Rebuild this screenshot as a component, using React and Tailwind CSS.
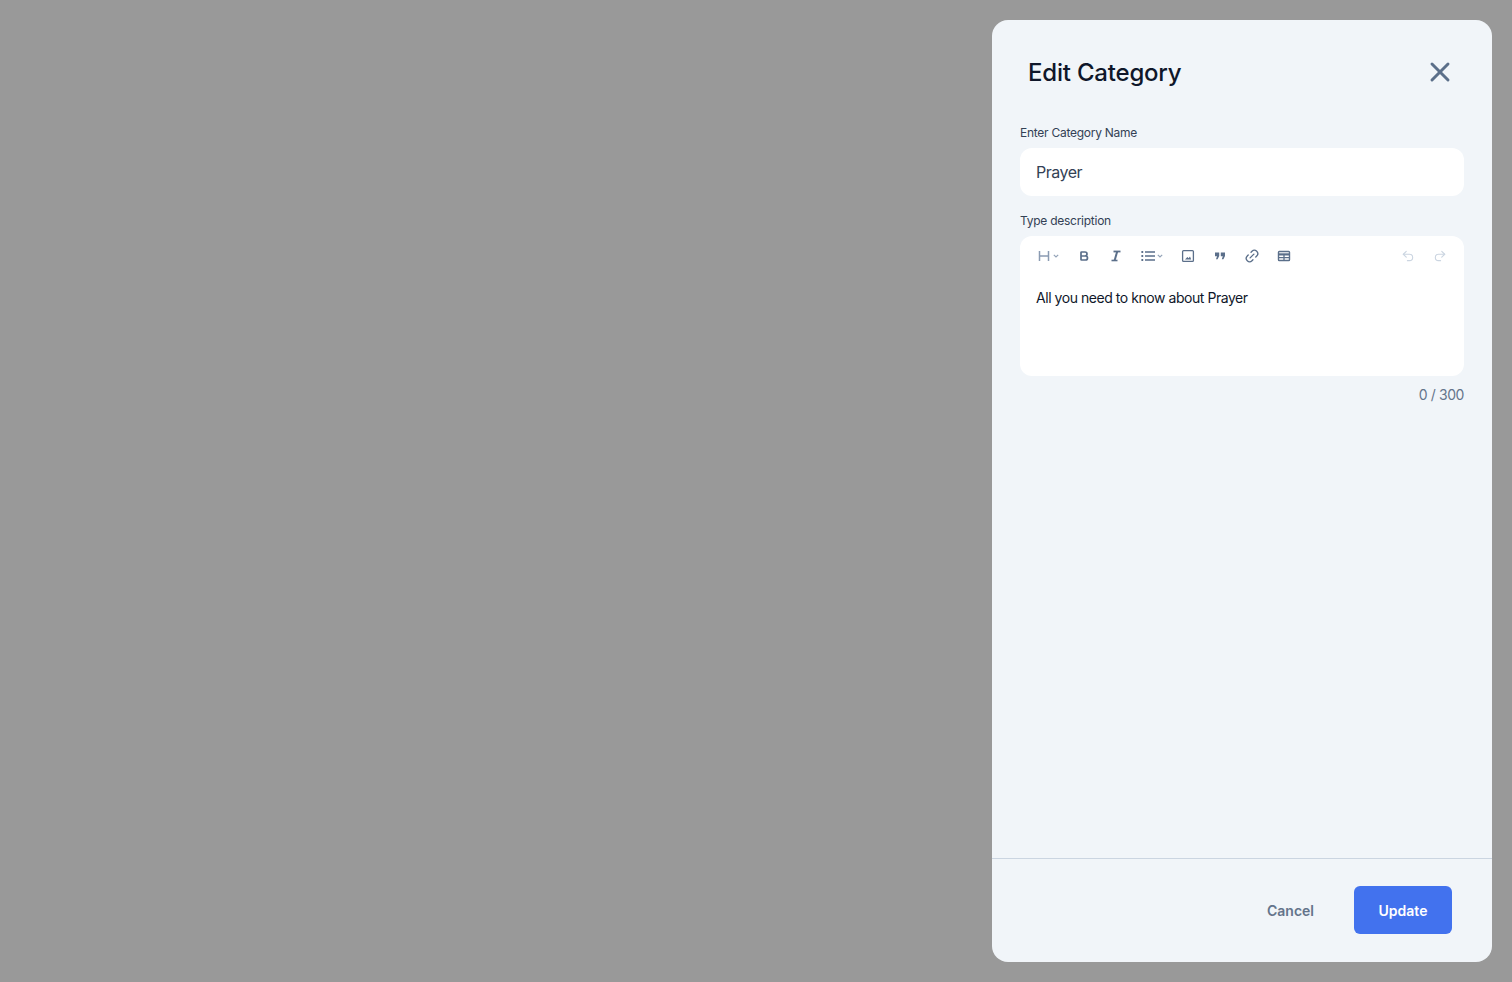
import React from "react";
import { X, Undo2, Redo2, Link2, Bold } from "lucide-react";

function ToolButton({ children }) {
  return <span className="flex h-4 w-4 items-center justify-center text-[#5b6f8a]">{children}</span>;
}

const Caret = () => (
  <svg width="6" height="4" viewBox="0 0 6 4" fill="none" stroke="#94a3b8" strokeWidth="1.2">
    <path d="M.8.8 3 3 5.2.8" />
  </svg>
);

const HeadingIcon = () => (
  <svg width="12" height="12" viewBox="0 0 12 12" fill="none" stroke="#8a9bb2" strokeWidth="1.5">
    <path d="M1.5 1v10M10.5 1v10M1.5 6h9" />
  </svg>
);

const ItalicIcon = () => (
  <svg width="12" height="12" viewBox="0 0 12 12" fill="none" stroke="#5b6f8a">
    <path d="M3.5 1.5h7" strokeWidth="1.8" />
    <path d="M7.2 1.5 4.6 10.5" strokeWidth="2" />
    <path d="M1.5 10.5h6" strokeWidth="1.6" />
  </svg>
);

const ListIcon = () => (
  <svg width="14" height="12" viewBox="0 0 14 12" fill="none" stroke="#5b6f8a" strokeWidth="1.3">
    <path d="M4 2h10M4 6h10M4 10h10" />
    <path d="M.4 2h1.8M.4 6h1.8M.4 10h1.8" strokeWidth="1.8" />
  </svg>
);

const ImageIcon = () => (
  <svg width="14" height="14" viewBox="0 0 14 14" fill="none">
    <rect x="1.6" y="1.6" width="10.8" height="10.8" rx="1" stroke="#5b6f8a" strokeWidth="1.3" />
    <path d="M4 10.4 6.4 8l1.2 1.2L9 7.6l1.2 2.8z" fill="#5b6f8a" />
  </svg>
);

const QuoteIcon = () => (
  <svg width="12" height="12" viewBox="0 0 12 12" fill="#5b6f8a">
    <path d="M1 2.5h4.2v3.4L3.6 9.2H2l1-3H1zM6.8 2.5H11v3.4L9.4 9.2H7.8l1-3h-2z" />
  </svg>
);

const TableIcon = () => (
  <svg width="14" height="14" viewBox="0 0 14 14" fill="none" stroke="#5b6f8a">
    <rect x="1.5" y="2.5" width="11" height="9" rx=".8" strokeWidth="1.4" />
    <path d="M1.5 5.4h11" strokeWidth="2.2" />
    <path d="M7 5v6.5M1.5 8.6h11" strokeWidth="1.3" />
  </svg>
);

export default function App() {
  return (
    <div className="flex h-[982px] w-full justify-end overflow-hidden bg-[#999999] p-5 font-['Inter','Liberation_Sans',sans-serif]">
      <div className="flex h-[942px] w-[500px] flex-col rounded-2xl bg-[#f1f5f9]">
        <div className="flex h-[104px] shrink-0 items-center justify-between pl-9 pr-[36px] pt-[2px]">
          <h2 className="text-[24px] font-medium tracking-[-0.2px] text-[#0f172a]">Edit Category</h2>
          <X size={32} strokeWidth={2.2} className="-mt-[2px] text-[#5b6f8a]" />
        </div>

        <div className="flex flex-1 flex-col px-7">
          <label className="h-4 pt-[1px] text-xs leading-4 tracking-[-0.26px] text-[#334155]">Enter Category Name</label>
          <div className="mt-2 flex h-12 items-center rounded-xl bg-white px-4 text-base tracking-[-0.5px] text-[#334155]">Prayer</div>

          <label className="mt-4 h-4 pt-[1px] text-xs leading-4 tracking-[-0.26px] text-[#334155]">Type description</label>
          <div className="mt-2 h-[140px] rounded-xl bg-white">
            <div className="flex h-10 items-center justify-between pl-[18px] pr-4">
              <div className="flex items-center gap-4">
                <span className="flex w-[22px] items-center gap-[3px]">
                  <HeadingIcon />
                  <Caret />
                </span>
                <span className="flex w-4 justify-center">
                  <Bold size={12} strokeWidth={3.4} className="text-[#5b6f8a]" />
                </span>
                <ToolButton><ItalicIcon /></ToolButton>
                <span className="flex w-[24px] items-center gap-[2px] pl-[1px]">
                  <ListIcon />
                  <Caret />
                </span>
                <span className="flex w-4 justify-center"><ImageIcon /></span>
                <ToolButton><QuoteIcon /></ToolButton>
                <ToolButton><Link2 size={16} strokeWidth={2} className="-rotate-45" /></ToolButton>
                <ToolButton><TableIcon /></ToolButton>
              </div>
              <div className="flex items-center gap-4 text-[#cbd5e1]">
                <span className="flex w-4 justify-center"><Undo2 size={14} strokeWidth={1.9} /></span>
                <span className="flex w-4 justify-center"><Redo2 size={14} strokeWidth={1.9} /></span>
              </div>
            </div>
            <p className="mt-[12px] px-4 text-sm leading-5 tracking-[-0.45px] text-[#0f172a]">All you need to know about Prayer</p>
          </div>
          <div className="mt-[9px] text-right text-sm leading-5 tracking-[-0.4px] text-[#64748b]">0 / 300</div>
        </div>

        <div className="flex h-[104px] shrink-0 items-center justify-end gap-10 border-t border-[#cbd5e1] pb-[1px] pl-6 pr-10">
          <button className="pt-[1px] text-sm font-semibold text-[#64748b]">Cancel</button>
          <button className="h-12 w-[98px] rounded-md bg-[#4272ee] pt-[1px] text-sm font-semibold text-white">Update</button>
        </div>
      </div>
    </div>
  );
}
